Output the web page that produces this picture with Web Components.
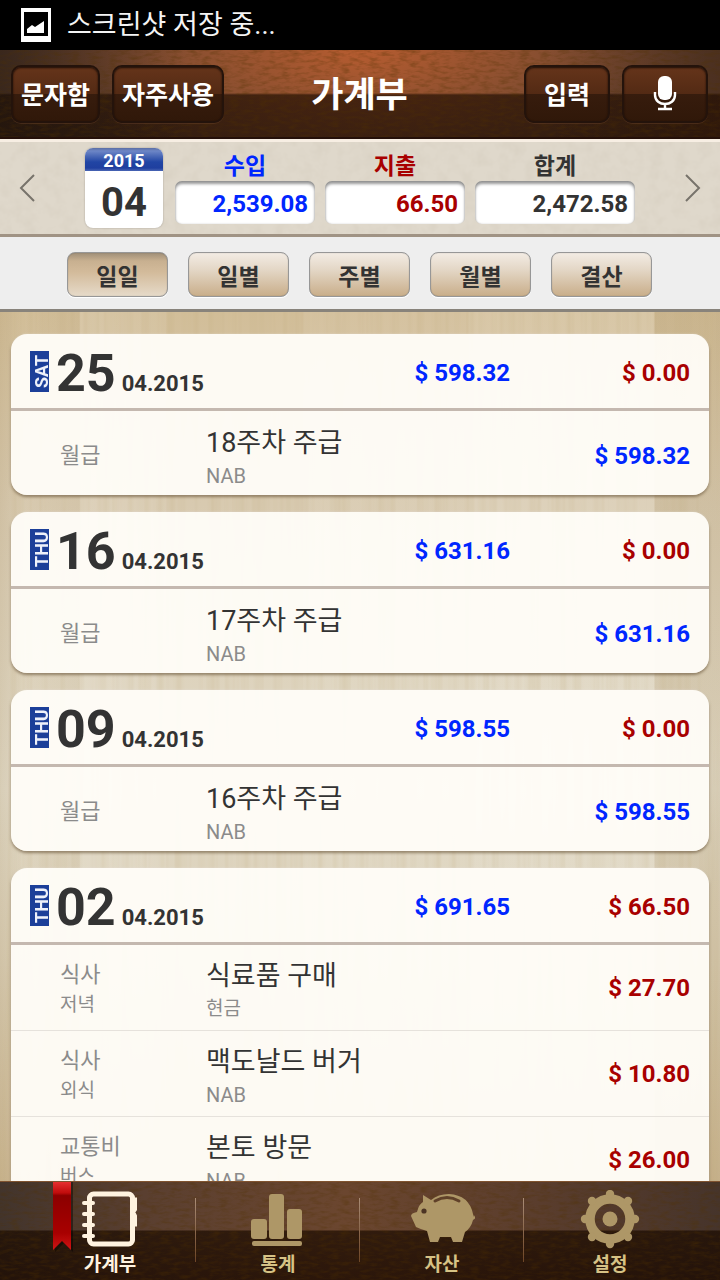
<!DOCTYPE html>
<html lang="ko">
<head>
<meta charset="utf-8">
<meta name="viewport" content="width=device-width, initial-scale=1">
<title>가계부</title>
<style>
  html, body { margin: 0; height: 100%; }
  body {
    font-family: Roboto, "Noto Sans CJK KR", sans-serif;
    color: #333;
    overflow: hidden;
  }
</style>
</head>
<body>
<ledger-app></ledger-app>

<script>
const define = (name, html, setup) => {
  const template = document.createElement('template');
  template.innerHTML = html;
  customElements.define(name, class extends HTMLElement {
    connectedCallback() {
      if (this.shadowRoot) return;
      this.attachShadow({ mode: 'open' }).append(template.content.cloneNode(true));
      if (setup) setup(this, this.shadowRoot);
    }
  });
};

/* Grain laid over a surface: leather, paper or wood. */
define('surface-grain', `
  <style>
    :host { position: absolute; inset: 0; pointer-events: none; overflow: hidden; }
    svg { display: block; width: 100%; height: 100%; }
  </style>
  <svg aria-hidden="true">
    <filter id="grain" x="0" y="0" width="100%" height="100%">
      <feTurbulence type="fractalNoise" numOctaves="3" seed="4"/>
      <feColorMatrix/>
    </filter>
    <rect width="100%" height="100%" filter="url(#grain)"/>
  </svg>
`, (host, root) => {
  const kinds = {
    leather: ['0.1 0.3', '0 0 0 0 0.08  0 0 0 0 0.03  0 0 0 0 0  0 0 0 0.8 -0.33'],
    paper: ['0.08 0.08', '0 0 0 0 0.4  0 0 0 0 0.34  0 0 0 0 0.25  0 0 0 0.2 -0.08'],
    wood: ['0.12 0.002', '0 0 0 0 0.5  0 0 0 0 0.38  0 0 0 0 0.18  0 0 0 0.4 -0.16']
  };
  const [frequency, matrix] = kinds[host.getAttribute('kind')];
  root.querySelector('feTurbulence').setAttribute('baseFrequency', frequency);
  root.querySelector('feColorMatrix').setAttribute('values', matrix);
});

define('status-bar', `
  <style>
    :host { display: flex; align-items: center; gap: 15px; height: 50px; padding: 0 20px;
      background: #000; color: #f4f4f4; font-size: 27px; line-height: 40px; box-sizing: border-box; }
    svg { display: block; width: 32px; height: 34px; }
  </style>
  <svg viewBox="0 0 32 34" aria-hidden="true">
    <path fill="#fff" fill-rule="evenodd" d="M1 0H31V34H1ZM4 4V28H28V4Z"/>
    <path fill="#fff" d="M7 25V21L12 17L15 19L24 13V25Z"/>
  </svg>
  <span><slot></slot></span>
`);

define('leather-button', `
  <style>
    :host { display: block; }
    button { display: flex; align-items: center; justify-content: center; width: 100%; height: 58px;
      margin: 0; padding: 4px 8px 0; box-sizing: border-box; border: 2px solid #24130b; border-radius: 10px;
      background: linear-gradient(#65341a, #532a14 50%, #371c0d 50%, #301809);
      box-shadow: inset 0 1px 2px #1d0e07, 0 1px 0 #6b442c66;
      color: #fff; font: 700 25px/32px Roboto, "Noto Sans CJK KR", sans-serif; }
  </style>
  <button type="button"><slot></slot></button>
`, (host, root) => {
  if (host.hasAttribute('label')) root.querySelector('button').setAttribute('aria-label', host.getAttribute('label'));
});

define('app-header', `
  <style>
    :host { position: relative; display: grid; grid-template-columns: 1fr auto 1fr; align-items: start;
      height: 89px; padding: 15px 12px 0 11px; box-sizing: border-box; border-bottom: 2px solid #241009;
      background:
        linear-gradient(#0000 43px, #1a0a00a8 45px),
        radial-gradient(ellipse 48% 150% at 50% 0, #b65c30, #8a4f30 50%, #5d4130 100%); }
    :host::before { content: ""; position: absolute; inset: 0;
      background: linear-gradient(90deg, #1b110b88, #0000 26%, #0000 76%, #2a0e0055); }
    h1 { position: relative; margin: 0; padding-top: 2px; color: #fff; font-size: 35px; font-weight: 700; line-height: 58px; }
    div { position: relative; display: flex; gap: 12px; }
    .end { justify-content: flex-end; }
    .end leather-button { width: 86px; }
    svg { display: block; width: 24px; height: 42px; }
  </style>
  <surface-grain kind="leather"></surface-grain>
  <div><leather-button>문자함</leather-button><leather-button>자주사용</leather-button></div>
  <h1>가계부</h1>
  <div class="end">
    <leather-button>입력</leather-button>
    <leather-button label="음성 입력">
      <svg viewBox="0 0 24 42" aria-hidden="true">
        <rect x="5" y="1" width="14" height="24" rx="6" fill="#fff"/>
        <path d="M2 17V20C2 32 22 32 22 20V17M12 29V33M5 34H19" fill="none" stroke="#fff" stroke-width="2.4"/>
      </svg>
    </leather-button>
  </div>
`);

define('month-card', `
  <style>
    :host { display: flex; flex-direction: column; flex: 0 0 78px; height: 80px; overflow: hidden;
      border-radius: 8px; background: #fff; text-align: center; font-weight: 700;
      box-shadow: 0 0 2px #0004; }
    .year { height: 23px; font-size: 18px; line-height: 26px; color: #fff;
      background: linear-gradient(#5b6ea4, #6d86c6 3px, #2145a4 14px, #1f3f9f 20px, #4a66b4); }
    .month { font-size: 40px; line-height: 64px; color: #333; }
  </style>
  <span class="year"><slot name="year"></slot></span>
  <span class="month"><slot></slot></span>
`);

define('total-field', `
  <style>
    :host { display: flex; flex-direction: column; font-weight: 700; color: var(--tone, #333); }
    .label { height: 32px; text-align: center; font-size: 23px; line-height: 36px; }
    output { height: 43px; padding: 0 7px; box-sizing: border-box; border-radius: 7px; background: #fff;
      box-shadow: inset 0 3px 3px #0006, inset 0 0 2px #0003; text-align: right;
      font-size: 24px; line-height: 46px; }
  </style>
  <span class="label"><slot name="label"></slot></span>
  <output><slot></slot></output>
`);

define('month-summary', `
  <style>
    :host { position: relative; display: flex; height: 98px; padding-top: 6px; box-sizing: border-box;
      background: #dfd8cb; border-top: 3px solid #f7eee3; border-bottom: 3px solid #a09384; }
    .step { position: relative; flex: 1 0 40px; display: flex; align-items: center; height: 80px; padding: 0 19px; border: 0; background: none; }
    .next { justify-content: flex-end; }
    .step svg { display: block; width: 16px; height: 28px; }
    month-card, .totals { position: relative; }
    .totals { display: grid; grid-template-columns: 140fr 140fr 160fr; gap: 10px; flex: 0 1 460px; margin-left: 12px; }
    total-field { margin-top: 1px; }
  </style>
  <surface-grain kind="paper"></surface-grain>
  <button class="step" type="button" aria-label="이전 달">
    <svg viewBox="0 0 16 28" aria-hidden="true"><path d="M15 1L2 14L15 27" fill="none" stroke="#77736b" stroke-width="2"/></svg>
  </button>
  <month-card><span slot="year">2015</span>04</month-card>
  <div class="totals">
    <total-field style="--tone:#0026ff"><span slot="label">수입</span>2,539.08</total-field>
    <total-field style="--tone:#a80000"><span slot="label">지출</span>66.50</total-field>
    <total-field><span slot="label">합계</span>2,472.58</total-field>
  </div>
  <button class="step next" type="button" aria-label="다음 달">
    <svg viewBox="0 0 16 28" aria-hidden="true"><path d="M1 1L14 14L1 27" fill="none" stroke="#77736b" stroke-width="2"/></svg>
  </button>
`);

define('period-tab', `
  <style>
    :host { display: block; flex: 0 1 101px; }
    button { width: 100%; height: 45px; margin: 0; padding: 6px 0 0; border: 1px solid #979797; border-radius: 8px;
      background: linear-gradient(#f3ece4, #e3d6c5 40%, #c9ae8a); box-shadow: inset 0 0 1px #0005, 0 1px 0 #fff;
      color: #333; font: 700 23px/36px Roboto, "Noto Sans CJK KR", sans-serif; }
    :host([selected]) button { background: linear-gradient(#a08f78, #c8b090 8px, #d3bb9b 45%, #e6dac9); }
  </style>
  <button type="button"><slot></slot></button>
`, (host, root) => {
  root.querySelector('button').setAttribute('aria-pressed', host.hasAttribute('selected'));
});

define('period-tabs', `
  <style>
    :host { display: flex; justify-content: center; gap: 20px; height: 75px; padding: 15px 21px 0 20px;
      box-sizing: border-box; background: #eee; border-bottom: 3px solid #88837b; }
  </style>
  <period-tab selected>일일</period-tab>
  <period-tab>일별</period-tab>
  <period-tab>주별</period-tab>
  <period-tab>월별</period-tab>
  <period-tab>결산</period-tab>
`);

define('day-card', `
  <style>
    :host { display: block; flex: none; border-radius: 16px; background: #fffdf8f2;
      box-shadow: 0 2px 3px #5f4a2c99, 0 0 2px #fff8; }
    header { display: grid; grid-template-columns: 19px auto 1fr 180px; align-items: center; height: 74px;
      padding: 0 19px; border-bottom: 3px solid #c4b8af; font-weight: 700; }
    .week { height: 41px; overflow: hidden; background: #1c3f99; color: #eef1fa; writing-mode: vertical-rl;
      transform: rotate(180deg); font-size: 18px; font-weight: 700; line-height: 24px; text-align: center; }
    .date { display: flex; align-items: baseline; gap: 6px; padding: 6px 0 0 7px; font-size: 22px; line-height: 24px; }
    .day { font-size: 52px; line-height: 60px; }
    .money { text-align: right; font-size: 24px; line-height: 32px; padding-top: 4px; }
    .in { color: #0026ff; }
    .out { color: #a80000; }
  </style>
  <header>
    <span class="week"><slot name="week"></slot></span>
    <span class="date"><span class="day"><slot name="day"></slot></span><span><slot name="month"></slot></span></span>
    <span class="money in"><slot name="in"></slot></span>
    <span class="money out"><slot name="out"></slot></span>
  </header>
  <slot></slot>
`);

define('entry-row', `
  <style>
    :host { display: grid; grid-template-columns: 146px 1fr auto; align-items: center; height: 84px;
      padding: 0 19px 0 49px; }
    :host([expense]) { height: 85px; border-bottom: 1px solid #e6e2dc; }
    .kind { font-size: 22px; line-height: 32px; color: #8b8b8b; padding-top: 6px; }
    .name { font-size: 27px; line-height: 36px; color: #333; padding-top: 10px; }
    .sub { display: block; font-size: 19px; line-height: 28px; color: #8b8b8b; }
    .name .sub { line-height: 30px; }
    .name.latin .sub { font-size: 20px; }
    .money { font-size: 24px; font-weight: 700; line-height: 32px; color: #0026ff; padding-top: 6px; }
    :host([expense]) .kind { padding-top: 2px; }
    :host([expense]) .name { padding-top: 6px; }
    :host([expense]) .money { color: #a80000; padding-top: 0; }
  </style>
  <span class="kind"><slot name="kind"></slot><span class="sub"><slot name="detail"></slot></span></span>
  <span class="name"><slot></slot><span class="sub"><slot name="account"></slot></span></span>
  <span class="money"><slot name="money"></slot></span>
`, (host, root) => {
  if (!host.querySelector('[slot="detail"]')) root.querySelector('.kind .sub').remove();
  const account = host.querySelector('[slot="account"]').textContent;
  root.querySelector('.name').classList.toggle('latin', /^[A-Z]+$/.test(account));
});

define('day-list', `
  <style>
    :host { position: relative; display: block; flex: 1 1 0; min-height: 0; overflow: hidden;
      background:
        linear-gradient(90deg, #7a5a2018, #0000 3%, #7a5a200c 11%, #fff2 11.2%, #fff1 23%, #0000 23.2%, #0000 42%, #fff1 42.2%, #fff1 65%, #fff2 65.2%, #fff2 90.8%, #7a5a2018 91%),
        linear-gradient(#d2be99, #d8cab0 22%, #e1d9c6 55%, #d9cdb4 75%, #cdb995); }
    .cards { position: relative; display: flex; flex-direction: column; gap: 17px; height: 100%;
      overflow: hidden; padding: 22px 11px 0; box-sizing: border-box; }
  </style>
  <surface-grain kind="wood"></surface-grain>
  <div class="cards"></div>
`, (host, root) => {
  const days = [
    ['SAT', '25', '$ 598.32', '$ 0.00', [['월급', '', '18주차 주급', 'NAB', '$ 598.32']]],
    ['THU', '16', '$ 631.16', '$ 0.00', [['월급', '', '17주차 주급', 'NAB', '$ 631.16']]],
    ['THU', '09', '$ 598.55', '$ 0.00', [['월급', '', '16주차 주급', 'NAB', '$ 598.55']]],
    ['THU', '02', '$ 691.65', '$ 66.50', [
      ['식사', '저녁', '식료품 구매', '현금', '$ 27.70', true],
      ['식사', '외식', '맥도날드 버거', 'NAB', '$ 10.80', true],
      ['교통비', '버스', '본토 방문', 'NAB', '$ 26.00', true]
    ]]
  ];
  const part = (slot, text) => text ? `<span slot="${slot}">${text}</span>` : '';
  root.querySelector('.cards').innerHTML = days.map(([week, day, income, expense, rows]) =>
    `<day-card>${part('week', week)}${part('day', day)}${part('month', '04.2015')}${part('in', income)}${part('out', expense)}${
      rows.map(([kind, detail, name, account, money, spent]) =>
        `<entry-row${spent ? ' expense' : ''}>${part('kind', kind)}${part('detail', detail)}${name}${part('account', account)}${part('money', money)}</entry-row>`
      ).join('')}</day-card>`
  ).join('');
});

define('nav-item', `
  <style>
    :host { position: relative; display: block; }
    :host(:not(:last-child))::after { content: ""; position: absolute; right: 0; top: 16px; width: 1px; height: 64px;
      background: linear-gradient(#a98c76, #6d4526); }
    a { display: flex; flex-direction: column; align-items: center; padding-top: 8px; text-decoration: none;
      color: #d6c285; font-size: 19px; font-weight: 700; line-height: 30px; }
    :host([selected]) a { color: #fff3e0; }
    :host(:first-child) a { padding-left: 24px; }
    :host(:last-child) a { padding-right: 24px; }
    ::slotted(svg) { display: block; width: 66px; height: 60px; }
  </style>
  <a><slot name="icon"></slot><span><slot></slot></span></a>
`, (host, root) => root.querySelector('a').setAttribute('href', host.getAttribute('to')));

define('bottom-nav', `
  <style>
    :host { position: relative; display: block; flex: none; height: 99px; border-top: 1px solid #80532f; box-sizing: border-box; overflow: hidden;
      background: linear-gradient(#0000 48px, #1b0b00b8 49px, #1a0900c8),
        linear-gradient(90deg, #42342c, #5a3f30 20%, #6b462f 48%, #5a3d2d 75%, #46342b); }
    nav { position: relative; display: grid; grid-template-columns: 196fr 164fr 164fr 196fr; }
    .ribbon { position: absolute; left: 51px; top: 0; width: 24px; height: 70px; display: block; }
  </style>
  <surface-grain kind="leather"></surface-grain>
  <svg class="ribbon" viewBox="0 0 24 70" aria-hidden="true">
    <defs><linearGradient id="red" x2="0" y2="1"><stop stop-color="#e63030"/><stop offset=".16" stop-color="#c00c0c"/><stop offset=".2" stop-color="#8c0000"/><stop offset=".75" stop-color="#a80000"/><stop offset="1" stop-color="#d01515"/></linearGradient></defs>
    <path d="M4 0H22V70L13 61L4 70Z" fill="#0006"/>
    <path d="M2 0H20V68L11 59L2 68Z" fill="url(#red)"/>
  </svg>
  <nav>
    <nav-item selected to="#ledger">
      <svg slot="icon" viewBox="0 0 66 60" aria-hidden="true" fill="none" stroke="#fff3e0" stroke-linecap="round">
        <rect x="12.500" y="4" width="43" height="50" rx="4" stroke-width="5"/>
        <path d="M7 13H16M7 24H16M7 35H16M7 46H16" stroke-width="4"/>
        <path d="M57 9.500H58V19.500L57 21M57 24L58 26V34.500H57" stroke-width="4"/>
      </svg>가계부</nav-item>
    <nav-item to="#stats">
      <svg slot="icon" viewBox="0 0 66 60" aria-hidden="true" fill="#ae9767">
        <rect x="6" y="29" width="16" height="20" rx="3"/><rect x="24" y="4" width="15" height="45" rx="3"/>
        <rect x="42" y="19" width="15" height="30" rx="3"/><rect x="7" y="51" width="50" height="5" rx="2"/>
      </svg>통계</nav-item>
    <nav-item to="#assets">
      <svg slot="icon" viewBox="0 0 66 60" aria-hidden="true">
        <g transform="translate(2 -1)"><path fill="#ae9767" d="M12 6L20 11Q27 5 38 5Q58 6 62 25L63 28L66 23Q66 29 62 31Q60 39 54 43L51 53H42L40 48H29L27 53H19L16 42Q9 40 5 38L0 27Q0 24 6 23Q8 15 12 13Z"/>
        <circle cx="13" cy="22" r="2.600" fill="#4c3424"/>
        <path d="M24 12Q36 5 48 12" fill="none" stroke="#604129" stroke-width="3" stroke-linecap="round"/></g>
      </svg>자산</nav-item>
    <nav-item to="#settings">
      <svg slot="icon" viewBox="0 0 66 60" aria-hidden="true" fill="#ae9767">
        <circle cx="33" cy="29" r="20" fill="none" stroke="#ae9767" stroke-width="9.500"/>
        <circle cx="33" cy="29" r="7.500"/>
        <circle cx="33" cy="4" r="4.200"/><circle cx="33" cy="54" r="4.200"/><circle cx="8" cy="29" r="4.200"/><circle cx="58" cy="29" r="4.200"/>
        <circle cx="15" cy="11" r="4.200"/><circle cx="51" cy="11" r="4.200"/><circle cx="15" cy="47" r="4.200"/><circle cx="51" cy="47" r="4.200"/>
      </svg>설정</nav-item>
  </nav>
`);

define('ledger-app', `
  <style>
    :host { display: flex; flex-direction: column; height: 100vh; }
    status-bar, app-header, month-summary, period-tabs { flex: none; }
  </style>
  <status-bar>스크린샷 저장 중...</status-bar>
  <app-header></app-header>
  <month-summary></month-summary>
  <period-tabs></period-tabs>
  <day-list></day-list>
  <bottom-nav></bottom-nav>
`);
</script>
</body>
</html>
